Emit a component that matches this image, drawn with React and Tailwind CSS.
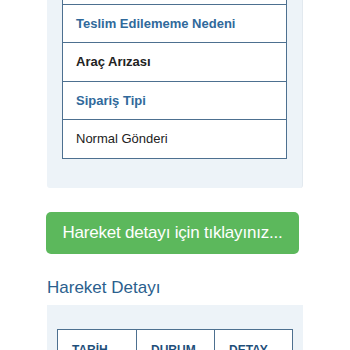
export default function App() {
  const rows = [
    { text: 'Teslim Tarihi', head: false },
    { text: 'Teslim Edilememe Nedeni', head: true },
    { text: 'Araç Arızası', head: false, bold: true },
    { text: 'Sipariş Tipi', head: true },
    { text: 'Normal Gönderi', head: false },
  ];

  return (
    <div
      className="w-[350px] h-[350px] overflow-hidden bg-white"
      style={{ fontFamily: '"Liberation Sans", Arial, sans-serif' }}
    >
      <div className="-mt-[35px] pl-[47px] pr-[47px]">
        <div className="bg-[#edf3f8] border-r border-[#e2e9ef] rounded-b-[3px] px-[15px] pb-[29px]">
          <div className="border-x border-b border-[#4d7090]">
            {rows.map((r, i) => (
              <div
                key={i}
                className={`h-[38.5px] flex items-center px-[13px] bg-white text-[13px] ${i > 0 ? 'border-t border-[#4d7090]' : ''} ${
                  r.head ? 'font-bold text-[#30699b]' : r.bold ? 'font-bold text-[#222]' : 'text-[#222]'
                }`}
              >
                {r.text}
              </div>
            ))}
          </div>
        </div>

        <button className="mt-[24px] -ml-[1px] w-[253px] h-[42px] rounded-[5px] bg-[#5cb85c] text-white text-[17px] tracking-[-0.2px] whitespace-nowrap flex items-center justify-center">
          Hareket detayı için tıklayınız...
        </button>

        <h3 className="mt-[22px] text-[17px] leading-[24px] text-[#2b5f8e]">Hareket Detayı</h3>

        <div className="mt-[5px] bg-[#edf3f8] px-[10px] pt-[24px] pb-[20px]">
          <div className="grid grid-cols-3 border border-[#4d7090] bg-white">
            {['TARİH', 'DURUM', 'DETAY'].map((h, i) => (
              <div
                key={h}
                className={`h-[40px] pt-[12px] px-[14px] text-[12px] leading-[16px] font-bold text-[#1f4f7a] ${i > 0 ? 'border-l border-[#4d7090]' : ''}`}
              >
                {h}
              </div>
            ))}
          </div>
        </div>
      </div>
    </div>
  );
}
